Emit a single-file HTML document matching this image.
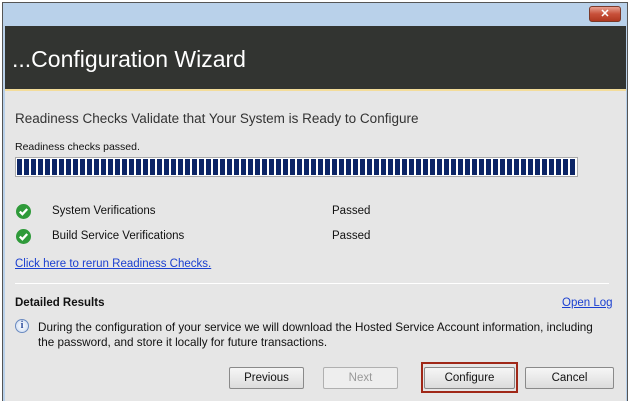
<!DOCTYPE html>
<html><head><style>
*{margin:0;padding:0;box-sizing:border-box}
body{width:631px;height:401px;background:#fff;font-family:"Liberation Sans",sans-serif;position:relative;overflow:hidden}
.frame{position:absolute;left:2px;top:2px;width:626px;height:399px;background:#b9d1ea;border:1px solid #555;border-bottom:none}
.hdr{position:absolute;left:5px;top:26px;width:621px;height:63px;background:#323431;color:#fff;font-size:23px;padding:20px 0 0 7px}
.yl{position:absolute;left:5px;top:89px;width:621px;height:2px;background:#f3dc9a}
.body{position:absolute;left:5px;top:91px;width:621px;height:310px;background:#e6e6e6}
.t{position:absolute;font-size:11.5px;color:#111;white-space:nowrap}
.close{position:absolute;left:589px;top:6px;width:32px;height:16px;border:1px solid #7a3a2a;border-radius:3px;background:linear-gradient(#e8a090,#c8503a 50%,#b03820);color:#fff;font-size:11px;font-weight:bold;text-align:center;line-height:14px}
.pb{position:absolute;left:15px;top:157px;width:563px;height:20px;border:1px solid #aaa;background:#fff;padding:1px}
.pb div{width:100%;height:100%;background:repeating-linear-gradient(90deg,#0c2566 0 5px,#fff 5px 7px)}
.chk{position:absolute;left:16px;width:15px;height:15px;border-radius:50%;background:#2f9a3a}
.chk svg{position:absolute;left:0;top:0}
.btn{position:absolute;top:367px;height:22px;border:1px solid #8a8a8a;border-radius:2px;background:linear-gradient(#f6f6f6,#dcdcdc);font-size:11.5px;text-align:center;line-height:20px;color:#111}
a{color:#1a3fd0;text-decoration:underline}
</style></head><body>
<div class="frame"></div>
<div class="close">✕</div>
<div class="hdr">...Configuration Wizard</div>
<div class="yl"></div>
<div class="body"></div>
<div class="t" style="left:15px;top:111px;font-size:13.5px;color:#333">Readiness Checks Validate that Your System is Ready to Configure</div>
<div class="t" style="left:15px;top:141px;font-size:10.5px">Readiness checks passed.</div>
<div class="pb"><div></div></div>
<div class="chk" style="top:204px"><svg width="15" height="15"><path d="M3.8 7.6l2.6 2.6 4.8-5.2" stroke="#fff" stroke-width="2.3" fill="none"/></svg></div>
<div class="chk" style="top:229px"><svg width="15" height="15"><path d="M3.8 7.6l2.6 2.6 4.8-5.2" stroke="#fff" stroke-width="2.3" fill="none"/></svg></div>
<div class="t" style="left:52px;top:205px">System Verifications</div>
<div class="t" style="left:332px;top:205px">Passed</div>
<div class="t" style="left:52px;top:230px">Build Service Verifications</div>
<div class="t" style="left:332px;top:230px">Passed</div>
<div class="t" style="left:15px;top:258px"><a>Click here to rerun Readiness Checks.</a></div>
<div style="position:absolute;left:15px;top:283px;width:594px;height:1px;background:#c8c8c8;border-bottom:1px solid #fff"></div>
<div class="t" style="left:15px;top:297px;font-weight:bold">Detailed Results</div>
<div class="t" style="left:562px;top:297px"><a>Open Log</a></div>
<div style="position:absolute;left:15px;top:319px;width:14px;height:14px;border-radius:50%;border:1px solid #6a8ac0;background:radial-gradient(#fff,#c8d8f0);color:#2a4a9a;font-size:10px;font-weight:bold;text-align:center;line-height:12px;font-family:'Liberation Serif',serif">i</div>
<div class="t" style="left:38px;top:320px;line-height:15px;font-size:11.7px">During the configuration of your service we will download the Hosted Service Account information, including<br>the password, and store it locally for future transactions.</div>
<div class="btn" style="left:229px;width:75px">Previous</div>
<div class="btn" style="left:323px;width:75px;color:#999;border-color:#b0b0b0;background:#eee">Next</div>
<div style="position:absolute;left:421px;top:362px;width:97px;height:31px;border:2px solid #a02818"></div>
<div class="btn" style="left:424px;width:91px">Configure</div>
<div class="btn" style="left:525px;width:89px">Cancel</div>
</body></html>
